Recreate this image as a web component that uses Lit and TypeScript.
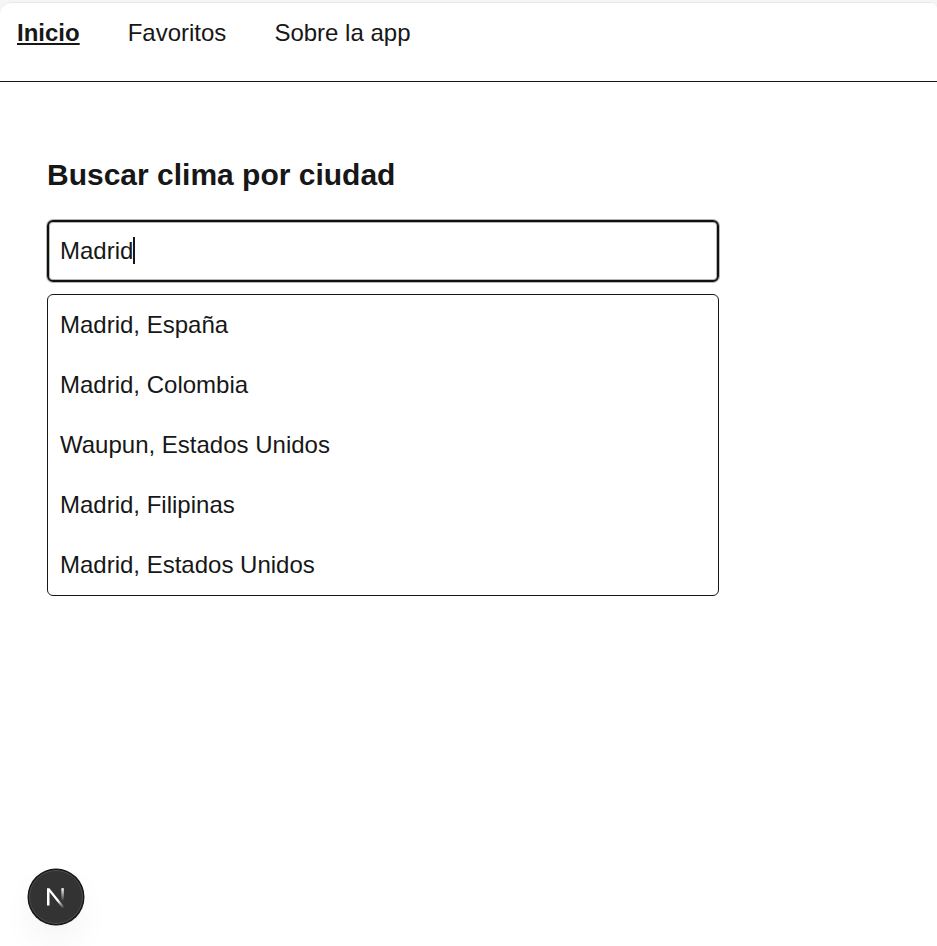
import { LitElement, html, css } from "lit";
import { customElement, property } from "lit/decorators.js";

@customElement("city-search")
class CitySearch extends LitElement {
  @property() query = "";
  @property({ attribute: false }) cities: string[] = [];

  static styles = css`
    :host { display: block; width: 672px; }
    .title { margin: 0; font-size: 30px; line-height: 42px; font-weight: 700; }
    .field {
      box-sizing: border-box; height: 62px; margin-top: 24px; padding: 0 11px 1px;
      border: 2px solid #111; border-radius: 6px;
      box-shadow: 0 0 0 1px #b4b8b5, inset 0 0 0 1px #b4b8b5;
      display: flex; align-items: center; font-size: 24px; line-height: 36px;
    }
    .caret { width: 2px; height: 27px; background: #171717; }
    .results {
      box-sizing: border-box; list-style: none; margin: 12px 0 0; padding: 0;
      border: 1px solid #171717; border-radius: 6px;
    }
    .city { height: 60px; line-height: 60px; padding: 0 12px; font-size: 24px; }
  `;

  render() {
    return html`
      <h1 class="title">Buscar clima por ciudad</h1>
      <div class="field" role="textbox"><span>${this.query}</span><span class="caret"></span></div>
      <ul class="results">${this.cities.map((c) => html`<li class="city">${c}</li>`)}</ul>
    `;
  }
}

@customElement("dev-badge")
class DevBadge extends LitElement {
  static styles = css`
    :host { display: block; }
    .badge {
      box-sizing: border-box; width: 54px; height: 54px; border-radius: 50%;
      background: #333; border: 1px solid #4c4c4c;
      box-shadow: 0 0 0 1.5px #171717, 0 16px 36px -4px rgba(0,0,0,.07), 0 2px 3px rgba(0,0,0,.04);
    }
    .mark { display: block; width: 52px; height: 52px; }
  `;

  render() {
    return html`<div class="badge">
      <svg class="mark" viewBox="0 0 52 52" fill="none">
        <defs>
          <linearGradient id="stem" x1="0" y1="17" x2="0" y2="30" gradientUnits="userSpaceOnUse">
            <stop offset="0" stop-color="#fff" /><stop offset="1" stop-color="#fff" stop-opacity="0" />
          </linearGradient>
          <linearGradient id="diag" x1="28" y1="29" x2="34" y2="37" gradientUnits="userSpaceOnUse">
            <stop offset="0" stop-color="#fff" /><stop offset="1" stop-color="#fff" stop-opacity="0" />
          </linearGradient>
        </defs>
        <path d="M17 34.5V17.2H19.4L34.5 36L32.6 37.4L19.5 21V34.5Z" fill="url(#diag)" />
        <path d="M32.6 17.2V30" stroke="url(#stem)" stroke-width="2.5" />
      </svg>
    </div>`;
  }
}

@customElement("app-root")
class AppRoot extends LitElement {
  private cities = [
    "Madrid, España",
    "Madrid, Colombia",
    "Waupun, Estados Unidos",
    "Madrid, Filipinas",
    "Madrid, Estados Unidos",
  ];

  static styles = css`
    :host {
      display: block; box-sizing: border-box; height: 946px; overflow: hidden;
      position: relative; background: #f5f5f5; padding-top: 2px;
      font-family: "Liberation Sans", Arial, sans-serif; color: #171717;
    }
    .page {
      box-sizing: border-box; height: 944px; background: #fff;
      border-top: 1px solid #e8e8e8; border-radius: 12px 6px 0 0;
    }
    .nav {
      box-sizing: border-box; height: 79px; padding: 12px 17px 0;
      display: flex; align-items: flex-start; gap: 48px;
      border-bottom: 1px solid #171717; font-size: 24px; line-height: 36px;
    }
    .active { font-weight: 700; text-decoration: underline; }
    .main { padding: 72px 47px 0; }
    .dev { position: absolute; left: 29px; top: 870px; }
  `;

  render() {
    return html`
      <div class="page">
        <nav class="nav">
          <span class="active">Inicio</span>
          <span>Favoritos</span>
          <span>Sobre la app</span>
        </nav>
        <main class="main">
          <city-search query="Madrid" .cities=${this.cities}></city-search>
        </main>
      </div>
      <dev-badge class="dev"></dev-badge>
    `;
  }
}
